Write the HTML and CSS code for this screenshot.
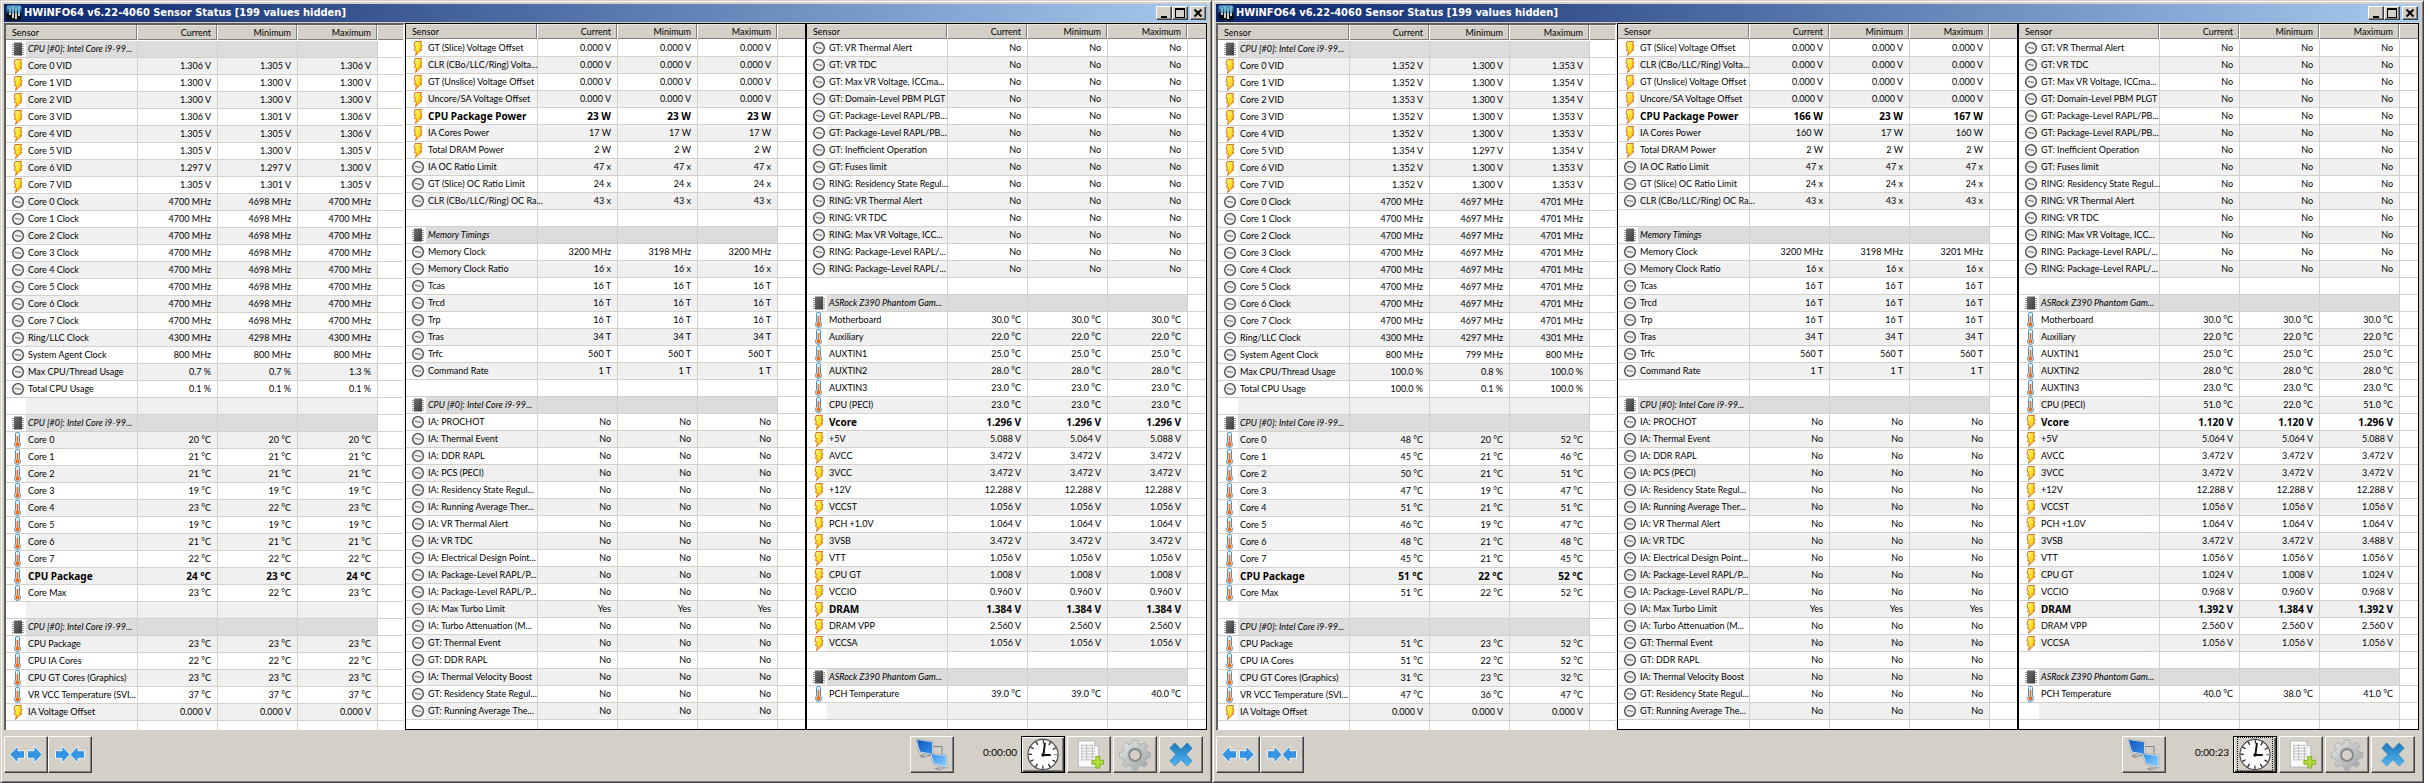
FILE: index.html
```
<!DOCTYPE html>
<html lang="en">
<head>
  <meta charset="UTF-8">
  <meta name="viewport" content="width=device-width, initial-scale=1.0">
  <title>HWiNFO64 Sensor Status</title>
  <link rel="stylesheet" href="styles.css">
</head>
<body>
  <!-- Shared icons -->
  <svg class="defs" width="0" height="0" aria-hidden="true">
    <defs>
      <linearGradient id="gBolt" x1="0" y1="0" x2="1" y2="1">
        <stop offset="0" stop-color="#fff3a0"/><stop offset=".5" stop-color="#ffe21f"/><stop offset="1" stop-color="#f9a400"/>
      </linearGradient>
      <linearGradient id="gChip" x1="0" y1="0" x2="1" y2="1">
        <stop offset="0" stop-color="#707070"/><stop offset="1" stop-color="#3c3c3e"/>
      </linearGradient>
      <linearGradient id="gLogo" x1="0" y1="0" x2="0" y2="1">
        <stop offset="0" stop-color="#6db4d8"/><stop offset=".45" stop-color="#1d4e70"/><stop offset=".5" stop-color="#05080c"/><stop offset="1" stop-color="#10151b"/>
      </linearGradient>
      <linearGradient id="gScreen" x1="0" y1="0" x2="1" y2="1">
        <stop offset="0" stop-color="#1556b8"/><stop offset=".5" stop-color="#2f8cec"/><stop offset="1" stop-color="#8fd0fb"/>
      </linearGradient>
      <linearGradient id="gGear" x1="0" y1="0" x2="1" y2="1">
        <stop offset="0" stop-color="#e8eaea"/><stop offset="1" stop-color="#9ca1a3"/>
      </linearGradient>
      <linearGradient id="gCross" x1="0" y1="0" x2="0" y2="1">
        <stop offset="0" stop-color="#1b78b8"/><stop offset="1" stop-color="#52b6ee"/>
      </linearGradient>
    </defs>
    <symbol id="volt" viewBox="0 0 14 16">
      <path d="M4 1.500h6.500L9.500 5l1.500.5-1.500 4H11L4.500 15.500l1-4.500-2-.5L4.500 7 3 6.500z" fill="url(#gBolt)" stroke="#d06a20" stroke-width=".9"/>
    </symbol>
    <symbol id="clock" viewBox="0 0 14 16">
      <circle cx="7" cy="8" r="6.500" fill="#dedede"/>
      <circle cx="7" cy="8" r="5.300" fill="#f0f0f0" stroke="#4a4a4a" stroke-width="1.300"/>
      <path d="M4 7.200l3 .8 3 .4" fill="none" stroke="#75625c"/>
    </symbol>
    <symbol id="temp" viewBox="0 0 14 16">
      <path d="M4.500 10V1.500q0-1 1-1h2q1 0 1 1V10q1 1 1 2.500 0 3-3 3t-3-3Q3.500 11 4.500 10z" fill="#d9f0fc" stroke="#4f91bd"/>
      <path d="M5.700 4h1.600v6.500q1.200.6 1.200 1.900 0 2-2 2t-2-2q0-1.300 1.200-1.900z" fill="#f56a10"/>
    </symbol>
    <symbol id="chip" viewBox="0 0 14 16">
      <path d="M1 3.500h12M1 5.500h12M1 7.500h12M1 9.500h12M1 11.500h12M1 13.500h12" stroke="#9a9a9a"/>
      <path d="M3 1.500h8v13H3z" fill="url(#gChip)"/>
    </symbol>
    <symbol id="logo" viewBox="0 0 16 16">
      <rect x=".5" y=".5" width="15" height="15" rx="2" fill="url(#gLogo)"/>
      <path d="M4 3v5M7 1.500V8M10 3v5M13 2v6" stroke="#8fd5ef" stroke-width="1.300"/>
      <path d="M4 8v2M7 8v5M10 8v6M13 8v3" stroke="#fff" stroke-width="1.600"/>
    </symbol>
    <symbol id="expand" viewBox="0 0 34 20">
      <path d="M.8 10L9 1.500v4.700h6.500v7.600H9v4.700zM33.200 10L25 1.500v4.700h-6.500v7.600H25v4.700z" fill="#3494e2" stroke="#f0f4f6"/>
    </symbol>
    <symbol id="shrink" viewBox="0 0 34 20">
      <path d="M17 10L9 1.500v4.700H2.500v7.600H9v4.700zM17 10l8-8.500v4.700h6.500v7.600H25v4.700z" fill="#3494e2" stroke="#f0f4f6"/>
    </symbol>
    <symbol id="network" viewBox="0 0 34 32">
      <path d="M18 8h9v9" fill="none" stroke="#808488"/>
      <path d="M4 17l8-2 4 2-8 2.500zM19 30l8-2 5 1-8 3z" fill="#8c8f92"/>
      <path d="M8 14l5 1v3H8zM23 27l5 1v3h-5z" fill="#b8bbbd"/>
      <path d="M1 .5l17 2.500v13.500L4 14zM15 14.500l17 2v13l-14-4z" fill="#e4eaf0" stroke="#8b97a5" stroke-width=".6"/>
      <path d="M2 1.500l15 2.300v11.500L5 13zM16.500 15.700l14.500 1.800v10.500L19 24.700z" fill="url(#gScreen)"/>
    </symbol>
    <symbol id="time" viewBox="0 0 34 34">
      <circle cx="17" cy="17" r="15.500" fill="#fff" stroke="#4a4a4a" stroke-width="1.200"/>
      <circle cx="17" cy="17" r="13" fill="none" stroke="#222" stroke-width="3.500" stroke-dasharray="1.300 5.507" stroke-dashoffset=".65"/>
      <path d="M17.500 17l1.500-12M17 17.500h8" fill="none" stroke="#111" stroke-width="2"/>
      <circle cx="17" cy="17.500" r="1.800" fill="#111"/>
    </symbol>
    <symbol id="log" viewBox="0 0 34 34">
      <path d="M6 3h17l4 5v22H6z" fill="#fafafa" stroke="#b9b9b9"/>
      <path d="M23 3v5h4" fill="#ddd" stroke="#b0b0b0"/>
      <path d="M9.500 7.500h11M9.500 10.500h14M9.500 13.500h14M9.500 16.500h14M9.500 19.500h14M9.500 22.500h10M9.500 7v16M14.500 7v16M20.500 7v16" fill="none" stroke="#bcbcbc"/>
      <path d="M24 19h4v4h4v4h-4v4h-4v-4h-4v-4h4z" fill="#b2dc3c" stroke="#7fae1c"/>
    </symbol>
    <symbol id="gear" viewBox="0 0 34 34">
      <path d="M14.500 2h5l1 4 2.500 1 4-2.500 3 3.500-2 3.500 1 2.500 4 1v5l-4 1-1 2.500 2 3.500-3.500 3-3.500-2-2.500 1-1 4h-5l-1-4-2.500-1-3.500 2-3.500-3 2-3.500-1-2.500-4-1v-5l4-1 1-2.500-2-3.500L7.500 4.500l3.500 2.500 2.500-1z" fill="url(#gGear)" stroke="#a4a8a9" stroke-width=".8"/>
      <circle cx="17" cy="17.500" r="8" fill="#aeb1b2"/>
      <circle cx="17" cy="17.500" r="6" fill="#d4d0c8" stroke="#7f8385" stroke-width="1.500"/>
    </symbol>
    <symbol id="cross" viewBox="0 0 34 34">
      <path d="M5.500 10.500L10.500 5l6.500 6.500L23.500 5l5 5.500-6 6.500 6 6.500-5 5.500-6.500-6.500-6.500 6.500-5-5.500 6-6.500z" fill="url(#gCross)" stroke="#2a88c4" stroke-width=".6"/>
    </symbol>
    <symbol id="winMin" viewBox="0 0 14 12"><path d="M4 9h6v2H4z"/></symbol>
    <symbol id="winMax" viewBox="0 0 14 12"><path d="M2 1h10v10H2zM3 3v7h8V3z" fill-rule="evenodd"/></symbol>
    <symbol id="winClose" viewBox="0 0 14 12"><path d="M3.500 2.500l7 7M10.500 2.500l-7 7" stroke="#000" stroke-width="2"/></symbol>
  </svg>

  <main class="desktop" id="desktop"></main>
  <script src="script.js"></script>
</body>
</html>
```

FILE: styles.css
```
* {
  box-sizing: border-box;
  margin: 0;
  padding: 0;
}
body {
  background-color: #d4d0c8;
  font-family: Lato, "Noto Sans", sans-serif;
  font-size: 9px;
  line-height: 16px;
  color: #000;
}
.defs {
  position: absolute;
}
.desktop {
  display: grid;
  grid-template-columns: 1fr 1fr;
}

/* window frame */
.window {
  background-color: #d4d0c8;
  border: 1px solid;
  border-color: #d4d0c8 #404040 #404040 #d4d0c8;
  box-shadow: inset 1px 1px #fff, inset -1px -1px #808080;
  padding: 3px;
}
.titlebar {
  display: flex;
  align-items: center;
  height: 18px;
  margin-bottom: 1px;
  padding: 0 2px;
  background: linear-gradient(to right, #0a246a, #a6caf0);
}
.titlebar .logo {
  width: 16px;
  height: 16px;
}
.titlebar h1 {
  flex: 1;
  margin-left: 2px;
  font-family: "DejaVu Sans Condensed", "DejaVu Sans", sans-serif;
  font-size: 11px;
  font-weight: bold;
  white-space: nowrap;
  color: #fff;
}
button {
  background-color: #d4d0c8;
  border: 1px solid;
  border-color: #fff #404040 #404040 #fff;
  box-shadow: inset -1px -1px #808080;
}
.caption {
  width: 16px;
  height: 14px;
}
.caption svg {
  display: block;
  width: 14px;
  height: 12px;
}
.caption.close {
  margin-left: 2px;
}

/* sensor lists */
.panels {
  display: grid;
  grid-template-columns: repeat(3, 1fr);
  margin-right: 1px;
}
.panel {
  min-width: 0;
  overflow: hidden;
  background-color: #fff;
  border: 1px solid #000;
}
.panel.sunken {
  border-width: 2px 2px 0 2px;
  border-color: #606060 #f4f2ee #fff #606060;
}
table {
  width: 100%;
  table-layout: fixed;
  border-collapse: separate;
  border-spacing: 0;
}
.col-icon {
  width: 20px;
}
.col-name {
  width: 112px;
}
.wide .col-name {
  width: 121px;
}
.col-value {
  width: 80px;
}
th {
  height: 16px;
  padding-right: 6px;
  background-color: #d4d0c8;
  border-right: 1px solid #fff;
  border-bottom: 1px solid #fff;
  box-shadow: inset -1px -1px #808080, inset 0 1px #e8e5df;
  font-weight: normal;
  line-height: 15px;
  text-align: right;
}
th.first {
  padding-left: 6px;
  text-align: left;
}
th.rest {
  border-right: none;
  box-shadow: inset 0 -1px #808080, inset 0 1px #e8e5df;
}
td {
  height: 17px;
  padding-right: 6px;
  border-right: 1px solid #d4d0c8;
  border-bottom: 1px solid #d4d0c8;
  text-align: right;
  white-space: nowrap;
}
td.icon {
  padding: 0 0 0 5px;
  border-right: none;
}
td.icon svg {
  display: block;
  width: 14px;
  height: 16px;
}
td.name {
  padding: 0 0 0 2px;
  text-align: left;
}
td.rest {
  padding: 0;
  border-right: none;
}
tr:nth-child(even) td {
  background-color: #f0f0f0;
}
tr.group td {
  background-color: #dcdcdc;
}
tbody tr td.icon,
tbody tr td.rest {
  background-color: #fff;
}
tr.group .name {
  font-style: italic;
}
tr.strong td {
  font-family: "Noto Sans", sans-serif;
  font-size: 10px;
  font-weight: bold;
}
tr.tail td {
  height: 9px;
  border-bottom: none;
}

/* bottom toolbar */
.toolbar {
  display: flex;
  justify-content: space-between;
  padding: 6px 5px 6px 0;
}
.tools-left {
  display: flex;
}
.tools-right {
  display: flex;
  gap: 2px;
}
.tool {
  display: flex;
  align-items: center;
  justify-content: center;
  width: 44px;
  height: 37px;
}
.tool svg {
  width: 34px;
  height: 33px;
}
.tool.default {
  border: 1px solid #000;
  box-shadow: inset 1px 1px #fff, inset -1px -1px #404040, inset -2px -2px #808080;
}
.tool.focused svg {
  outline: 1px dotted #000;
}
.timer {
  width: 63px;
  padding-right: 2px;
  font-size: 10px;
  line-height: 32px;
  text-align: right;
}
```

FILE: script.js
```
// icon | name | current, min, max of the first window | current, min, max of the second
// One value is repeated everywhere.
// "*" in front of a name makes the row bold, an empty line is an empty row.
const panels = [
`chip|CPU [#0]: Intel Core i9-99...
volt|Core 0 VID|1.306 V|1.305 V|1.306 V|1.352 V|1.300 V|1.353 V
volt|Core 1 VID|1.300 V|1.300 V|1.300 V|1.352 V|1.300 V|1.354 V
volt|Core 2 VID|1.300 V|1.300 V|1.300 V|1.353 V|1.300 V|1.354 V
volt|Core 3 VID|1.306 V|1.301 V|1.306 V|1.352 V|1.300 V|1.353 V
volt|Core 4 VID|1.305 V|1.305 V|1.306 V|1.352 V|1.300 V|1.353 V
volt|Core 5 VID|1.305 V|1.300 V|1.305 V|1.354 V|1.297 V|1.354 V
volt|Core 6 VID|1.297 V|1.297 V|1.300 V|1.352 V|1.300 V|1.353 V
volt|Core 7 VID|1.305 V|1.301 V|1.305 V|1.352 V|1.300 V|1.353 V
clock|Core 0 Clock|4700 MHz|4698 MHz|4700 MHz|4700 MHz|4697 MHz|4701 MHz
clock|Core 1 Clock|4700 MHz|4698 MHz|4700 MHz|4700 MHz|4697 MHz|4701 MHz
clock|Core 2 Clock|4700 MHz|4698 MHz|4700 MHz|4700 MHz|4697 MHz|4701 MHz
clock|Core 3 Clock|4700 MHz|4698 MHz|4700 MHz|4700 MHz|4697 MHz|4701 MHz
clock|Core 4 Clock|4700 MHz|4698 MHz|4700 MHz|4700 MHz|4697 MHz|4701 MHz
clock|Core 5 Clock|4700 MHz|4698 MHz|4700 MHz|4700 MHz|4697 MHz|4701 MHz
clock|Core 6 Clock|4700 MHz|4698 MHz|4700 MHz|4700 MHz|4697 MHz|4701 MHz
clock|Core 7 Clock|4700 MHz|4698 MHz|4700 MHz|4700 MHz|4697 MHz|4701 MHz
clock|Ring/LLC Clock|4300 MHz|4298 MHz|4300 MHz|4300 MHz|4297 MHz|4301 MHz
clock|System Agent Clock|800 MHz|800 MHz|800 MHz|800 MHz|799 MHz|800 MHz
clock|Max CPU/Thread Usage|0.7 %|0.7 %|1.3 %|100.0 %|0.8 %|100.0 %
clock|Total CPU Usage|0.1 %|0.1 %|0.1 %|100.0 %|0.1 %|100.0 %

chip|CPU [#0]: Intel Core i9-99...
temp|Core 0|20 °C|20 °C|20 °C|48 °C|20 °C|52 °C
temp|Core 1|21 °C|21 °C|21 °C|45 °C|21 °C|46 °C
temp|Core 2|21 °C|21 °C|21 °C|50 °C|21 °C|51 °C
temp|Core 3|19 °C|19 °C|19 °C|47 °C|19 °C|47 °C
temp|Core 4|23 °C|22 °C|23 °C|51 °C|21 °C|51 °C
temp|Core 5|19 °C|19 °C|19 °C|46 °C|19 °C|47 °C
temp|Core 6|21 °C|21 °C|21 °C|48 °C|21 °C|48 °C
temp|Core 7|22 °C|22 °C|22 °C|45 °C|21 °C|45 °C
temp|*CPU Package|24 °C|23 °C|24 °C|51 °C|22 °C|52 °C
temp|Core Max|23 °C|22 °C|23 °C|51 °C|22 °C|52 °C

chip|CPU [#0]: Intel Core i9-99...
temp|CPU Package|23 °C|23 °C|23 °C|51 °C|23 °C|52 °C
temp|CPU IA Cores|22 °C|22 °C|22 °C|51 °C|22 °C|52 °C
temp|CPU GT Cores (Graphics)|23 °C|23 °C|23 °C|31 °C|23 °C|32 °C
temp|VR VCC Temperature (SVI...|37 °C|37 °C|37 °C|47 °C|36 °C|47 °C
volt|IA Voltage Offset|0.000 V`,

`volt|GT (Slice) Voltage Offset|0.000 V
volt|CLR (CBo/LLC/Ring) Volta...|0.000 V
volt|GT (Unslice) Voltage Offset|0.000 V
volt|Uncore/SA Voltage Offset|0.000 V
volt|*CPU Package Power|23 W|23 W|23 W|166 W|23 W|167 W
volt|IA Cores Power|17 W|17 W|17 W|160 W|17 W|160 W
volt|Total DRAM Power|2 W
clock|IA OC Ratio Limit|47 x
clock|GT (Slice) OC Ratio Limit|24 x
clock|CLR (CBo/LLC/Ring) OC Ra...|43 x

chip|Memory Timings
clock|Memory Clock|3200 MHz|3198 MHz|3200 MHz|3200 MHz|3198 MHz|3201 MHz
clock|Memory Clock Ratio|16 x
clock|Tcas|16 T
clock|Trcd|16 T
clock|Trp|16 T
clock|Tras|34 T
clock|Trfc|560 T
clock|Command Rate|1 T

chip|CPU [#0]: Intel Core i9-99...
clock|IA: PROCHOT|No
clock|IA: Thermal Event|No
clock|IA: DDR RAPL|No
clock|IA: PCS (PECI)|No
clock|IA: Residency State Regul...|No
clock|IA: Running Average Ther...|No
clock|IA: VR Thermal Alert|No
clock|IA: VR TDC|No
clock|IA: Electrical Design Point...|No
clock|IA: Package-Level RAPL/P...|No
clock|IA: Package-Level RAPL/P...|No
clock|IA: Max Turbo Limit|Yes
clock|IA: Turbo Attenuation (M...|No
clock|GT: Thermal Event|No
clock|GT: DDR RAPL|No
clock|IA: Thermal Velocity Boost|No
clock|GT: Residency State Regul...|No
clock|GT: Running Average The...|No`,

`clock|GT: VR Thermal Alert|No
clock|GT: VR TDC|No
clock|GT: Max VR Voltage, ICCma...|No
clock|GT: Domain-Level PBM PLGT|No
clock|GT: Package-Level RAPL/PB...|No
clock|GT: Package-Level RAPL/PB...|No
clock|GT: Inefficient Operation|No
clock|GT: Fuses limit|No
clock|RING: Residency State Regul...|No
clock|RING: VR Thermal Alert|No
clock|RING: VR TDC|No
clock|RING: Max VR Voltage, ICC...|No
clock|RING: Package-Level RAPL/...|No
clock|RING: Package-Level RAPL/...|No

chip|ASRock Z390 Phantom Gam...
temp|Motherboard|30.0 °C
temp|Auxiliary|22.0 °C
temp|AUXTIN1|25.0 °C
temp|AUXTIN2|28.0 °C
temp|AUXTIN3|23.0 °C
temp|CPU (PECI)|23.0 °C|23.0 °C|23.0 °C|51.0 °C|22.0 °C|51.0 °C
volt|*Vcore|1.296 V|1.296 V|1.296 V|1.120 V|1.120 V|1.296 V
volt|+5V|5.088 V|5.064 V|5.088 V|5.064 V|5.064 V|5.088 V
volt|AVCC|3.472 V
volt|3VCC|3.472 V
volt|+12V|12.288 V
volt|VCCST|1.056 V
volt|PCH +1.0V|1.064 V
volt|3VSB|3.472 V|3.472 V|3.472 V|3.472 V|3.472 V|3.488 V
volt|VTT|1.056 V
volt|CPU GT|1.008 V|1.008 V|1.008 V|1.024 V|1.008 V|1.024 V
volt|VCCIO|0.960 V|0.960 V|0.960 V|0.968 V|0.960 V|0.968 V
volt|*DRAM|1.384 V|1.384 V|1.384 V|1.392 V|1.384 V|1.392 V
volt|DRAM VPP|2.560 V
volt|VCCSA|1.056 V

chip|ASRock Z390 Phantom Gam...
temp|PCH Temperature|39.0 °C|39.0 °C|40.0 °C|40.0 °C|38.0 °C|41.0 °C
`
];

const timers = ['0:00:00', '0:00:23'];
const panelClasses = ['sunken', 'middle', 'wide'];

function icon(id, cls = '') {
  return `<svg class="${cls}" aria-hidden="true"><use href="#${id}"/></svg>`;
}

function tool(id, label, cls = '') {
  return `<button type="button" class="tool ${cls}" aria-label="${label}">${icon(id)}</button>`;
}

function rowHtml(line, win) {
  let [type, name = '', ...values] = line.split('|');
  if (values.length === 1) values = [values[0], values[0], values[0]];
  if (values.length === 6) values = values.slice(win * 3, win * 3 + 3);
  let cls = type === 'chip' ? 'group' : '';
  if (name.startsWith('*')) {
    cls = 'strong';
    name = name.slice(1);
  }
  return `<tr class="${cls}"><td class="icon">${type ? icon(type) : ''}</td><td class="name">${name}</td>` +
    [0, 1, 2].map(i => `<td>${values[i] || ''}</td>`).join('') + '<td class="rest"></td></tr>';
}

function panelHtml(text, index, win) {
  return `<section class="panel ${panelClasses[index]}"><table>
    <colgroup><col class="col-icon"><col class="col-name"><col class="col-value"><col class="col-value"><col class="col-value"><col></colgroup>
    <thead><tr><th class="first" colspan="2">Sensor</th><th>Current</th><th>Minimum</th><th>Maximum</th><th class="rest"></th></tr></thead>
    <tbody>${text.split('\n').map(line => rowHtml(line, win)).join('')}
    <tr class="tail"><td class="icon"></td><td class="name"></td><td></td><td></td><td></td><td class="rest"></td></tr></tbody>
  </table></section>`;
}

function windowHtml(time, win) {
  return `<section class="window">
    <header class="titlebar">${icon('logo', 'logo')}<h1>HWiNFO64 v6.22-4060 Sensor Status [199 values hidden]</h1>
      <button type="button" class="caption" aria-label="Minimize">${icon('winMin')}</button>
      <button type="button" class="caption" aria-label="Maximize">${icon('winMax')}</button>
      <button type="button" class="caption close" aria-label="Close">${icon('winClose')}</button>
    </header>
    <div class="panels">${panels.map((text, i) => panelHtml(text, i, win)).join('')}</div>
    <footer class="toolbar">
      <div class="tools-left">${tool('expand', 'Expand columns')}${tool('shrink', 'Shrink columns')}</div>
      <div class="tools-right">${tool('network', 'Remote monitoring')}<span class="timer">${time}</span>
        ${tool('time', 'Reset timer', win === 1 ? 'default focused' : 'default')}${tool('log', 'Start logging')}${tool('gear', 'Settings')}${tool('cross', 'Close sensors')}</div>
    </footer>
  </section>`;
}

document.getElementById('desktop').innerHTML = timers.map(windowHtml).join('');
```
